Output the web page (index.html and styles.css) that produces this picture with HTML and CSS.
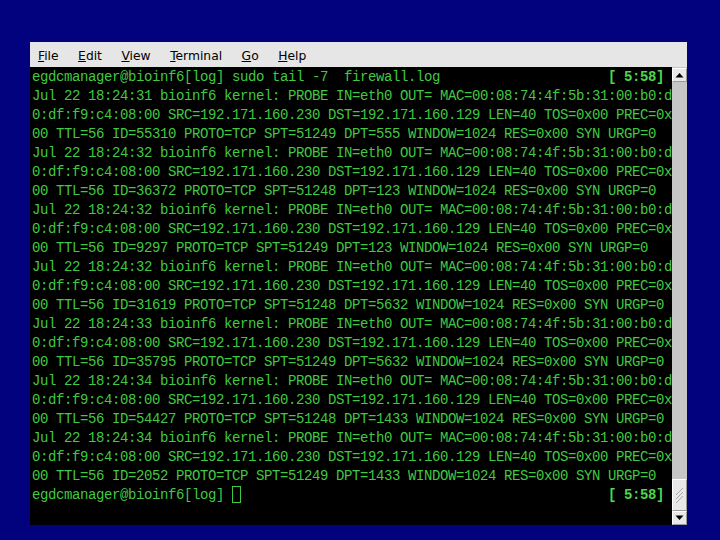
FILE: index.html
```html
<!DOCTYPE html>
<html>
<head>
<meta charset="utf-8">
<link rel="stylesheet" href="styles.css">
</head>
<body>
<div class="window">
  <div class="menubar">
    <span class="menu"><u>F</u>ile</span>
    <span class="menu"><u>E</u>dit</span>
    <span class="menu"><u>V</u>iew</span>
    <span class="menu"><u>T</u>erminal</span>
    <span class="menu"><u>G</u>o</span>
    <span class="menu"><u>H</u>elp</span>
  </div>
  <div class="body">
    <div class="term">
      <div class="line row"><span>egdcmanager@bioinf6[log] sudo tail -7  firewall.log</span><b class="clock">[ 5:58]</b></div>
      <div class="line">Jul 22 18:24:31 bioinf6 kernel: PROBE IN=eth0 OUT= MAC=00:08:74:4f:5b:31:00:b0:d</div>
      <div class="line">0:df:f9:c4:08:00 SRC=192.171.160.230 DST=192.171.160.129 LEN=40 TOS=0x00 PREC=0x</div>
      <div class="line">00 TTL=56 ID=55310 PROTO=TCP SPT=51249 DPT=555 WINDOW=1024 RES=0x00 SYN URGP=0</div>
      <div class="line">Jul 22 18:24:32 bioinf6 kernel: PROBE IN=eth0 OUT= MAC=00:08:74:4f:5b:31:00:b0:d</div>
      <div class="line">0:df:f9:c4:08:00 SRC=192.171.160.230 DST=192.171.160.129 LEN=40 TOS=0x00 PREC=0x</div>
      <div class="line">00 TTL=56 ID=36372 PROTO=TCP SPT=51248 DPT=123 WINDOW=1024 RES=0x00 SYN URGP=0</div>
      <div class="line">Jul 22 18:24:32 bioinf6 kernel: PROBE IN=eth0 OUT= MAC=00:08:74:4f:5b:31:00:b0:d</div>
      <div class="line">0:df:f9:c4:08:00 SRC=192.171.160.230 DST=192.171.160.129 LEN=40 TOS=0x00 PREC=0x</div>
      <div class="line">00 TTL=56 ID=9297 PROTO=TCP SPT=51249 DPT=123 WINDOW=1024 RES=0x00 SYN URGP=0</div>
      <div class="line">Jul 22 18:24:32 bioinf6 kernel: PROBE IN=eth0 OUT= MAC=00:08:74:4f:5b:31:00:b0:d</div>
      <div class="line">0:df:f9:c4:08:00 SRC=192.171.160.230 DST=192.171.160.129 LEN=40 TOS=0x00 PREC=0x</div>
      <div class="line">00 TTL=56 ID=31619 PROTO=TCP SPT=51248 DPT=5632 WINDOW=1024 RES=0x00 SYN URGP=0</div>
      <div class="line">Jul 22 18:24:33 bioinf6 kernel: PROBE IN=eth0 OUT= MAC=00:08:74:4f:5b:31:00:b0:d</div>
      <div class="line">0:df:f9:c4:08:00 SRC=192.171.160.230 DST=192.171.160.129 LEN=40 TOS=0x00 PREC=0x</div>
      <div class="line">00 TTL=56 ID=35795 PROTO=TCP SPT=51249 DPT=5632 WINDOW=1024 RES=0x00 SYN URGP=0</div>
      <div class="line">Jul 22 18:24:34 bioinf6 kernel: PROBE IN=eth0 OUT= MAC=00:08:74:4f:5b:31:00:b0:d</div>
      <div class="line">0:df:f9:c4:08:00 SRC=192.171.160.230 DST=192.171.160.129 LEN=40 TOS=0x00 PREC=0x</div>
      <div class="line">00 TTL=56 ID=54427 PROTO=TCP SPT=51248 DPT=1433 WINDOW=1024 RES=0x00 SYN URGP=0</div>
      <div class="line">Jul 22 18:24:34 bioinf6 kernel: PROBE IN=eth0 OUT= MAC=00:08:74:4f:5b:31:00:b0:d</div>
      <div class="line">0:df:f9:c4:08:00 SRC=192.171.160.230 DST=192.171.160.129 LEN=40 TOS=0x00 PREC=0x</div>
      <div class="line">00 TTL=56 ID=2052 PROTO=TCP SPT=51249 DPT=1433 WINDOW=1024 RES=0x00 SYN URGP=0</div>
      <div class="line row"><span>egdcmanager@bioinf6[log] <i class="cursor"></i></span><b class="clock">[ 5:58]</b></div>
    </div>
    <div class="scrollbar">
      <div class="btn"><svg width="9" height="6" viewBox="0 0 9 6"><path d="M0.5 5.5 L4.5 1 L8.5 5.5 Z" fill="#000"/></svg></div>
      <div class="trough"></div>
      <div class="thumb"><svg width="13" height="29" viewBox="0 0 13 29"><path d="M3 15 L10 8 M3 19 L10 12 M3 23 L10 16" stroke="#a8a8a8" stroke-width="1"/></svg></div>
      <div class="btn"><svg width="9" height="6" viewBox="0 0 9 6"><path d="M0.5 0.5 L4.5 5 L8.5 0.5 Z" fill="#000"/></svg></div>
    </div>
  </div>
</div>
</body>
</html>
```
FILE: styles.css
```css
html, body {
  margin: 0;
  padding: 0;
}
body {
  background: #02027e;
  width: 720px;
  height: 540px;
  overflow: hidden;
}
.window {
  margin: 42px 0 0 30px;
  width: 657px;
  height: 483px;
  background: #e6e6e6;
  display: flex;
  flex-direction: column;
}
.menubar {
  height: 25px;
  display: flex;
  align-items: center;
  padding: 2px 0 0 8px;
  box-sizing: border-box;
  gap: 19.5px;
  font-family: "DejaVu Sans", sans-serif;
  font-size: 12.3px;
  color: #000;
}
.menu u {
  text-decoration: underline;
  text-underline-offset: 1px;
}
.body {
  flex: 1;
  display: flex;
  min-height: 0;
}
.term {
  flex: 1;
  background: #000;
  color: #42c842;
  font-family: "Liberation Mono", monospace;
  font-size: 14px;
  letter-spacing: -0.4px;
  line-height: 19px;
  padding: 1px 0 0 2px;
  overflow: hidden;
}
.line {
  white-space: pre;
  height: 19px;
}
.row {
  display: flex;
  justify-content: space-between;
  padding-right: 8px;
}
.clock {
  font-weight: bold;
  color: #4cd84c;
}
.cursor {
  display: inline-block;
  width: 7px;
  height: 15px;
  border: 1px solid #42c842;
  vertical-align: -4px;
  letter-spacing: 0;
}
.scrollbar {
  width: 15px;
  background: #c6c6c6;
  display: flex;
  flex-direction: column;
  padding-top: 1px;
}
.btn {
  height: 12px;
  background: #e8e8e8;
  border: 1px solid #9a9a9a;
  border-top-color: #fff;
  border-left-color: #fff;
  display: flex;
  align-items: center;
  justify-content: center;
}
.trough {
  flex: 1;
}
.thumb {
  height: 30px;
  background: #e8e8e8;
  border: 1px solid #9a9a9a;
  border-top-color: #fff;
  border-left-color: #fff;
  display: flex;
}
```
